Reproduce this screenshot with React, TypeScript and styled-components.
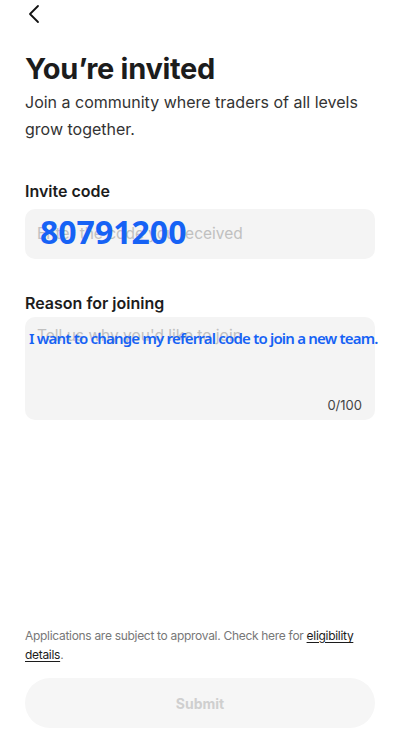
import React from "react";
import styled, { createGlobalStyle } from "styled-components";

const Global = createGlobalStyle`
  html, body { margin: 0; padding: 0; background: #fff; }
  body { font-family: Inter, "Liberation Sans", sans-serif; color: #1c1c1c; }
`;

const Page = styled.div`
  width: 400px;
  height: 749px;
  display: flex;
  flex-direction: column;
  box-sizing: border-box;
  padding: 0 25px;
`;

const TopBar = styled.div`
  height: 28px;
  display: flex;
  align-items: center;
  margin-left: 3px;
`;

const Title = styled.h1`
  margin: 23px 0 0;
  font-size: 29px;
  font-weight: 700;
  letter-spacing: -0.3px;
  line-height: 36px;
`;

const Subtitle = styled.p`
  margin: 2px 0 0;
  font-size: 16px;
  line-height: 27px;
  color: #333;
`;

const Label = styled.div<{ $top: number }>`
  margin-top: ${(p) => p.$top}px;
  font-size: 16px;
  font-weight: 600;
  line-height: 22px;
`;

const Field = styled.div<{ $h: number; $gap: number }>`
  position: relative;
  margin-top: ${(p) => p.$gap}px;
  height: ${(p) => p.$h}px;
  background: #f4f4f4;
  border-radius: 10px;
  box-sizing: border-box;
  padding: 0 12px;
`;

const Placeholder = styled.div<{ $top: number }>`
  padding-top: ${(p) => p.$top}px;
  font-size: 15.5px;
  color: #c0c0c0;
`;

const Counter = styled.div`
  position: absolute;
  right: 13px;
  bottom: 7px;
  font-size: 13px;
  color: #444;
`;

const Note = styled.div<{ $size: number; $top: number; $left: number; $track: number }>`
  position: absolute;
  left: ${(p) => p.$left}px;
  top: ${(p) => p.$top}px;
  font-family: "Noto Sans", sans-serif;
  font-size: ${(p) => p.$size}px;
  font-weight: ${(p) => (p.$size > 20 ? 700 : 600)};
  letter-spacing: ${(p) => p.$track}px;
  color: #1662f5;
  white-space: nowrap;
  line-height: 1;
`;

const Spacer = styled.div`
  flex: 1;
`;

const Footer = styled.p`
  margin: 0;
  font-size: 12px;
  letter-spacing: -0.3px;
  line-height: 19px;
  color: #777;
  a {
    color: #1c1c1c;
    text-decoration: underline;
    text-underline-offset: 2px;
  }
`;

const Submit = styled.button`
  margin: 14px 0 21px;
  height: 50px;
  border: none;
  border-radius: 25px;
  background: #f6f6f6;
  color: #cfcfcf;
  font-family: Inter, "Liberation Sans", sans-serif;
  font-size: 14px;
  font-weight: 700;
`;

export default function App() {
  return (
    <Page>
      <Global />
      <TopBar>
        <svg width="12" height="20" viewBox="0 0 12 20" fill="none">
          <path d="M10 2 L2 10 L10 18" stroke="#111" strokeWidth="1.8" strokeLinecap="round" strokeLinejoin="round" />
        </svg>
      </TopBar>
      <Title>You’re invited</Title>
      <Subtitle>Join a community where traders of all levels grow together.</Subtitle>

      <Label $top={37}>Invite code</Label>
      <Field $h={50} $gap={7}>
        <Placeholder $top={15}>Enter the code you received</Placeholder>
        <Note $size={32} $top={7} $left={15} $track={0}>80791200</Note>
      </Field>

      <Label $top={33}>Reason for joining</Label>
      <Field $h={103} $gap={3}>
        <Placeholder $top={9}>Tell us why you'd like to join</Placeholder>
        <Note $size={15} $top={14} $left={4} $track={-0.8}>
          I want to change my referral code to join a new team.
        </Note>
        <Counter>0/100</Counter>
      </Field>

      <Spacer />
      <Footer>
        Applications are subject to approval. Check here for <a>eligibility details</a>.
      </Footer>
      <Submit>Submit</Submit>
    </Page>
  );
}
